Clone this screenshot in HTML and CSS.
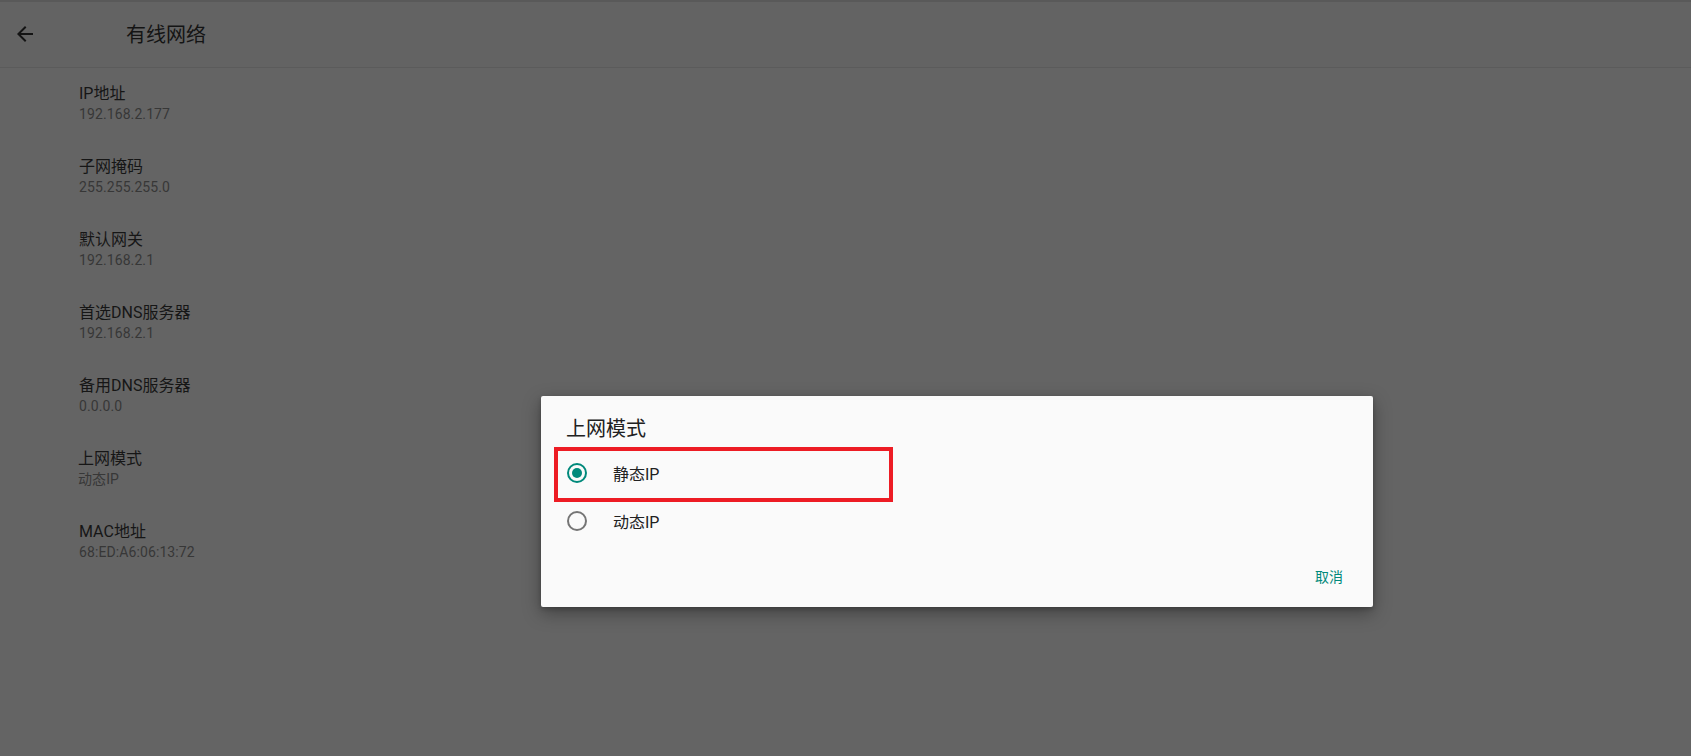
FILE: index.html
```html
<!DOCTYPE html>
<html lang="zh-CN">
<head>
<meta charset="utf-8">
<title>有线网络</title>
<link rel="stylesheet" href="styles.css">
</head>
<body>
<div class="screen">
  <header class="appbar">
    <span class="back">
      <svg viewBox="0 0 24 24" width="24" height="24"><path d="M20 11H7.83l5.59-5.59L12 4l-8 8 8 8 1.41-1.41L7.83 13H20v-2z" fill="#141414"/></svg>
    </span>
    <h1 class="appbar-title">有线网络</h1>
  </header>
  <ul class="prefs">
    <li class="pref"><div class="pref-title">IP地址</div><div class="pref-sub">192.168.2.177</div></li>
    <li class="pref"><div class="pref-title">子网掩码</div><div class="pref-sub">255.255.255.0</div></li>
    <li class="pref"><div class="pref-title">默认网关</div><div class="pref-sub">192.168.2.1</div></li>
    <li class="pref"><div class="pref-title">首选DNS服务器</div><div class="pref-sub">192.168.2.1</div></li>
    <li class="pref"><div class="pref-title">备用DNS服务器</div><div class="pref-sub">0.0.0.0</div></li>
    <li class="pref pref-shift"><div class="pref-title">上网模式</div><div class="pref-sub">动态IP</div></li>
    <li class="pref"><div class="pref-title">MAC地址</div><div class="pref-sub">68:ED:A6:06:13:72</div></li>
  </ul>
  <div class="dialog">
    <div class="dialog-title">上网模式</div>
    <div class="choices">
      <div class="choice"><span class="radio radio-on"></span><span class="choice-label">静态IP</span></div>
      <div class="choice"><span class="radio"></span><span class="choice-label">动态IP</span></div>
    </div>
    <div class="dialog-actions"><span class="btn">取消</span></div>
    <div class="highlight"></div>
  </div>
</div>
</body>
</html>
```

FILE: styles.css
```css
* { box-sizing: border-box; }
html, body { margin: 0; padding: 0; }
body {
  font-family: Roboto, "Noto Sans CJK SC", sans-serif;
  background: #646464;
}
.screen {
  position: relative;
  width: 1691px;
  height: 756px;
  background: #646464;
  overflow: hidden;
}
.appbar {
  height: 68px;
  border-top: 2px solid #595959;
  border-bottom: 1px solid #5b5b5b;
  background: #636363;
  display: flex;
  align-items: center;
  padding-left: 13px;
}
.back { width: 24px; height: 24px; display: flex; margin-top: -1px; }
.appbar-title {
  margin: 0 0 0 89px;
  font-size: 20px;
  font-weight: 400;
  color: #141414;
  line-height: 28px;
}
.prefs {
  list-style: none;
  margin: 0;
  padding: 0 0 0 79px;
}
.pref {
  height: 73px;
  padding-top: 16px;
}
.pref-shift { margin-left: -1px; }
.pref-title {
  font-size: 16px;
  line-height: 20px;
  color: #161616;
}
.pref-sub {
  font-size: 14px;
  line-height: 20px;
  color: #373737;
  letter-spacing: 0.1px;
}
.dialog {
  position: absolute;
  left: 541px;
  top: 396px;
  width: 832px;
  height: 211px;
  background: #fafafa;
  border-radius: 2px;
  box-shadow: 0 6px 18px rgba(0,0,0,0.35), 0 2px 4px rgba(0,0,0,0.2);
  display: flex;
  flex-direction: column;
}
.dialog-title {
  padding: 19px 0 0 25px;
  font-size: 20px;
  line-height: 28px;
  color: #212121;
  height: 53px;
}
.choices { display: flex; flex-direction: column; }
.choice {
  height: 48px;
  display: flex;
  align-items: center;
  padding-left: 26px;
}
.radio {
  width: 20px;
  height: 20px;
  border-radius: 50%;
  border: 2px solid #757575;
  display: flex;
  align-items: center;
  justify-content: center;
  flex: none;
}
.radio-on { border-color: #00897b; }
.radio-on::after {
  content: "";
  width: 10px;
  height: 10px;
  border-radius: 50%;
  background: #00897b;
}
.choice-label {
  margin-left: 26px;
  font-size: 16px;
  color: #212121;
}
.dialog-actions {
  display: flex;
  justify-content: flex-end;
  padding: 14px 22px 0 0;
}
.btn {
  height: 36px;
  line-height: 36px;
  padding: 0 8px;
  font-size: 14px;
  color: #00897b;
}
.highlight {
  position: absolute;
  left: 13px;
  top: 51px;
  width: 339px;
  height: 55px;
  border: 4px solid #ed1c24;
}
```
